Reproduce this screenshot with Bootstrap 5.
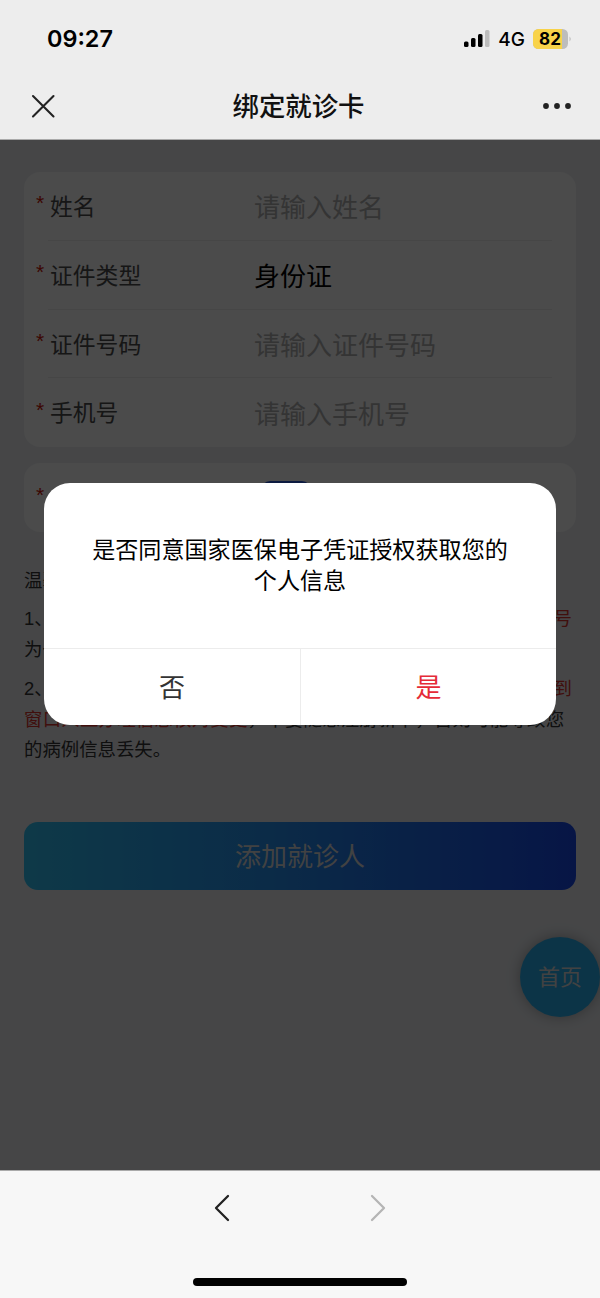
<!DOCTYPE html>
<html lang="zh-CN">
<head>
<meta charset="utf-8">
<meta name="viewport" content="width=device-width, initial-scale=1">
<title>绑定就诊卡</title>
<link href="https://cdn.jsdelivr.net/npm/bootstrap@5.3.0/dist/css/bootstrap.min.css" rel="stylesheet">
<style>
body{font-family:"Liberation Sans","Noto Sans CJK SC",sans-serif;height:1298px;overflow:hidden;color:#000}
.topbar{height:140px;background:#ededed;border-bottom:1px solid #aaa}
.status-row{height:76px;padding:1px 28px 0 47px;font-family:Inter,sans-serif}
.clock{font-size:23.4px;font-weight:600;line-height:1}
.net{font-size:19px;font-weight:500;line-height:1;margin:1px 8px 0 8px}
.title-row{height:60px;padding:0 28px 0 31px}
.page-title{font-size:26.4px;font-weight:500;line-height:1;padding-top:2px;color:#111}
.page-body{background:#e9ebef;padding:32px 24px 0}
.panel{background:#fafafa;border-radius:16px}
.field{height:68.8px;padding-left:12px}
.field>div{line-height:1}
.star{color:#c81408;font-size:21px;width:14px;height:28px}
.lbl{color:#4c4c4c;font-size:22.8px;width:204px;padding-top:2px}
.inp{font-size:26px;color:#000;padding-top:4px}
.inp.hint{color:#b0b0b0}
.rule{height:1px;background:#eaeaea;margin:-1px 24px 0}
.tips{font-size:18.4px;line-height:30.8px;color:#333;padding-top:34px;white-space:nowrap}
.tips p{margin-bottom:7.7px}
.tips .warn{color:#d8352c}
.wide{letter-spacing:.24px}
.add-btn{height:68px;border-radius:14px;background:linear-gradient(90deg,#30c0f2,#268fef 45%,#1848e8);color:#ddd;font-size:26px;margin-top:56px;padding-top:3px}
.home-btn{right:0;top:797px;width:80px;height:80px;background:#2bb0ee;color:#ddd;font-size:22px;box-shadow:0 0 14px rgba(0,0,0,.3)}
.shade{background:rgba(0,0,0,.7);padding:343px 44px 0}
.dialog-box{height:242px;background:#fff;border-radius:26px;overflow:hidden}
.dialog-text{height:165px;font-size:23.1px;line-height:30.8px;padding-top:52px;white-space:nowrap}
.choice{font-size:26px;color:#333;padding-top:3px}
.choice+.choice{border-left:1px solid #ececec;color:#e52b38}
.choices{border-top:1px solid #ececec}
.botbar{height:128px;background:#f7f7f7;border-top:1px solid #aaa;padding-top:23px}
.homeline{width:214px;height:8px;border-radius:4px;background:#000;margin-top:56px}
</style>
</head>
<body class="d-flex flex-column">
<header class="topbar flex-shrink-0">
  <div class="status-row d-flex align-items-center justify-content-between">
    <span class="clock">09:27</span>
    <div class="d-flex align-items-center">
      <svg width="26" height="18" viewBox="0 0 26 18"><rect x="0" y="11.500" width="4.500" height="5.500" rx="1.5"/><rect x="7" y="8" width="4.500" height="9" rx="1.5"/><rect x="14" y="4" width="4.500" height="13" rx="1.5"/><rect x="21" y="0" width="4.500" height="17" rx="1.5" fill="#bdbdbd"/></svg>
      <span class="net">4G</span>
      <svg width="39" height="20" viewBox="0 0 39 20"><defs><clipPath id="bat"><rect width="35" height="20" rx="5.5"/></clipPath></defs><g clip-path="url(#bat)"><rect width="35" height="20" fill="#bdbdbd"/><rect width="29" height="20" fill="#f8d34a"/></g><path d="M36.5 7.5q2.5 2.5 0 5z" fill="#bdbdbd"/><text x="17" y="16" text-anchor="middle" font-family="Inter" font-weight="700" font-size="17">82</text></svg>
    </div>
  </div>
  <div class="title-row d-flex align-items-center justify-content-between">
    <svg width="24" height="24" viewBox="0 0 24 24" stroke="#222" stroke-width="2.1" stroke-linecap="round"><path d="M2 2l20.500 20.500M22.500 2L2 22.500"/></svg>
    <h1 class="page-title mb-0">绑定就诊卡</h1>
    <svg width="30" height="8" viewBox="0 0 30 8" fill="#222"><circle cx="4" cy="4" r="2.900"/><circle cx="15" cy="4" r="2.900"/><circle cx="26" cy="4" r="2.900"/></svg>
  </div>
</header>
<main class="page-body position-relative flex-grow-1 overflow-hidden">
  <section class="panel">
    <div class="field d-flex align-items-center"><div class="star">*</div><div class="lbl">姓名</div><div class="inp hint">请输入姓名</div></div>
    <div class="rule"></div>
    <div class="field d-flex align-items-center"><div class="star">*</div><div class="lbl">证件类型</div><div class="inp">身份证</div></div>
    <div class="rule"></div>
    <div class="field d-flex align-items-center"><div class="star">*</div><div class="lbl">证件号码</div><div class="inp hint">请输入证件号码</div></div>
    <div class="rule"></div>
    <div class="field d-flex align-items-center"><div class="star">*</div><div class="lbl">手机号</div><div class="inp hint">请输入手机号</div></div>
  </section>
  <section class="panel mt-3">
    <div class="field d-flex align-items-center"><div class="star">*</div><div class="lbl"></div>
      <svg width="56" height="34" viewBox="0 0 56 34"><rect x="7" width="50" height="34" rx="9" fill="#2a58d8"/></svg></div>
  </section>
  <section class="tips">
    <p>温馨</p>
    <p class="d-flex justify-content-between flex-wrap pe-0"><span>1、</span><span class="warn me-1">号</span><span class="w-100">为一</span></p>
    <div class="d-flex justify-content-between"><span>2、</span><span class="warn me-1">到</span></div>
    <p class="mb-0 wide"><span class="warn">窗口人工办理信息核对变更</span>，不要随意注册新卡，否则可能导致您</p>
    <p class="mb-0">的病例信息丢失。</p>
  </section>
  <div class="add-btn d-flex align-items-center justify-content-center">添加就诊人</div>
  <div class="home-btn position-absolute rounded-circle d-flex align-items-center justify-content-center">首页</div>
  <div class="shade position-absolute top-0 start-0 w-100 h-100">
    <div class="dialog-box d-flex flex-column" role="dialog">
      <div class="dialog-text text-center">是否同意国家医保电子凭证授权获取您的<br>个人信息</div>
      <div class="choices d-flex flex-grow-1">
        <div class="choice w-50 d-flex align-items-center justify-content-center">否</div>
        <div class="choice w-50 d-flex align-items-center justify-content-center">是</div>
      </div>
    </div>
  </div>
</main>
<footer class="botbar flex-shrink-0 d-flex flex-column align-items-center">
  <svg width="172" height="28" viewBox="0 0 172 28" fill="none" stroke-width="2.300" stroke-linecap="round" stroke-linejoin="round"><path d="M14 2L2 14L14 26" stroke="#222"/><path d="M158 2L170 14L158 26" stroke="#b5b5b5"/></svg>
  <div class="homeline"></div>
</footer>
<script src="https://cdn.jsdelivr.net/npm/bootstrap@5.3.0/dist/js/bootstrap.bundle.min.js"></script>
</body>
</html>
